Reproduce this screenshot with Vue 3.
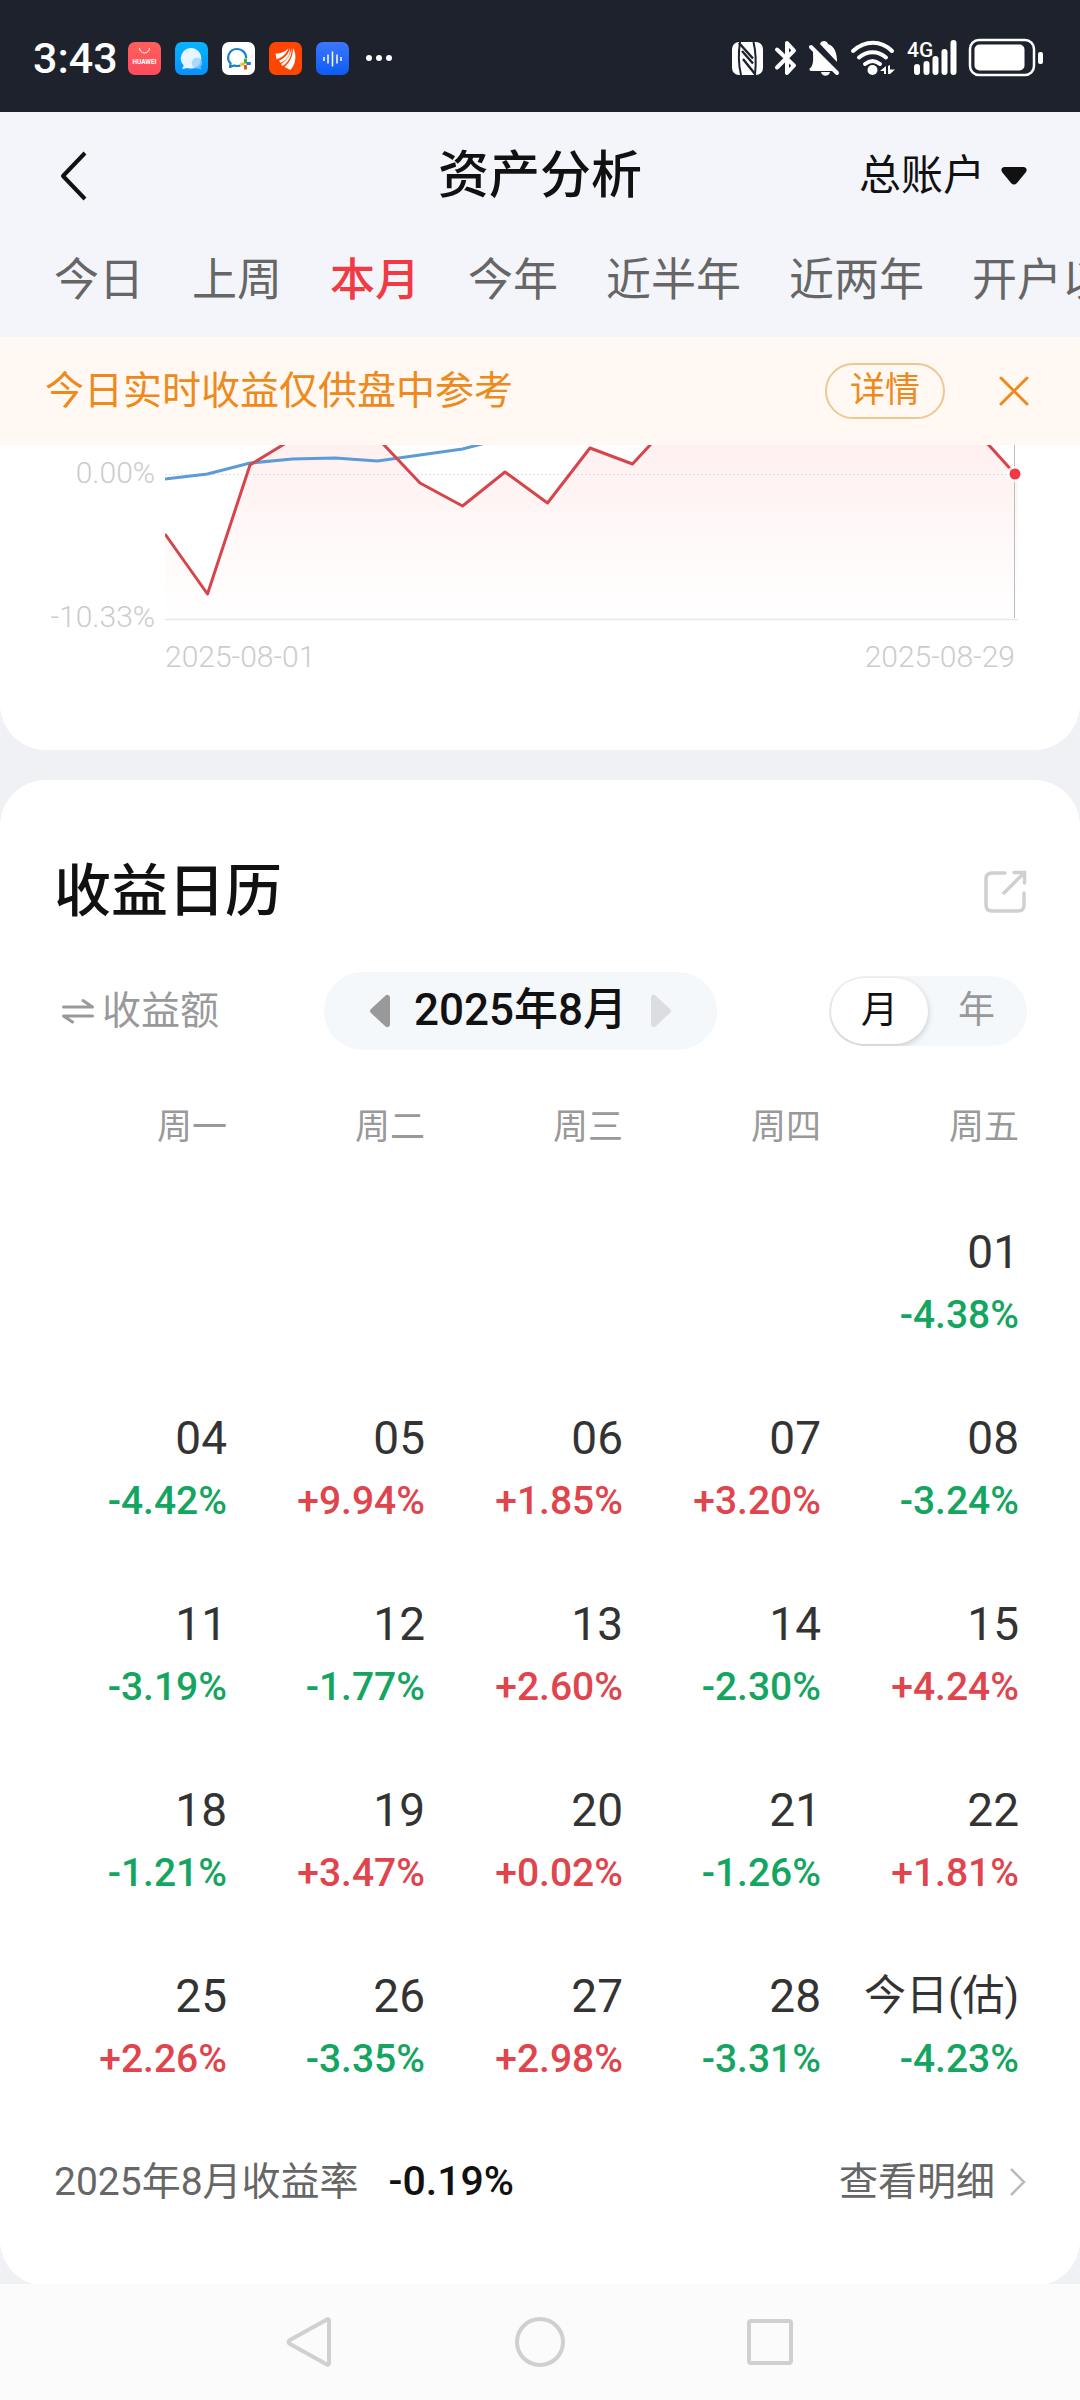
<script setup>
import { ref, computed } from 'vue'

const tabs = ['今日', '上周', '本月', '今年', '近半年', '近两年', '开户以来']
const activeTab = ref('本月')
const account = ref('总账户')
const showNotice = ref(true)
const mode = ref('month')

const weekdays = ['周一', '周二', '周三', '周四', '周五']
const weeks = [
  [null, null, null, null, { day: '01', rate: -4.38 }],
  [
    { day: '04', rate: -4.42 },
    { day: '05', rate: 9.94 },
    { day: '06', rate: 1.85 },
    { day: '07', rate: 3.2 },
    { day: '08', rate: -3.24 }
  ],
  [
    { day: '11', rate: -3.19 },
    { day: '12', rate: -1.77 },
    { day: '13', rate: 2.6 },
    { day: '14', rate: -2.3 },
    { day: '15', rate: 4.24 }
  ],
  [
    { day: '18', rate: -1.21 },
    { day: '19', rate: 3.47 },
    { day: '20', rate: 0.02 },
    { day: '21', rate: -1.26 },
    { day: '22', rate: 1.81 }
  ],
  [
    { day: '25', rate: 2.26 },
    { day: '26', rate: -3.35 },
    { day: '27', rate: 2.98 },
    { day: '28', rate: -3.31 },
    { day: '今日(估)', rate: -4.23 }
  ]
]

const formatRate = (rate) => (rate > 0 ? '+' : '') + rate.toFixed(2) + '%'

// 折线坐标，横向步长 42.5
const step = 42.5
const mine = [89, 149, 20, -6, -50, -7, 38, 61, 27, 58, 3, 19, -27, -60, -70, -80, -70, -60, -50, -18, 29]
const market = [34, 29, 18, 14, 13, 16, 10, 4, -7]

const toPoints = (list) => list.map((y, i) => `${i * step},${y}`).join(' ')
const minePoints = computed(() => toPoints(mine))
const marketPoints = computed(() => toPoints(market))
const areaPoints = computed(() => `0,174 ${minePoints.value} 853,29 853,174`)
</script>

<template>
  <div class="page">
    <div class="status-bar">
      <span class="time">3:43</span>
      <div class="apps">
        <svg viewBox="0 0 33 33">
          <defs>
            <linearGradient id="g-red" x1="0" y1="0" x2="0" y2="1">
              <stop offset="0" stop-color="#ff605c" />
              <stop offset="1" stop-color="#ff4a5c" />
            </linearGradient>
          </defs>
          <rect width="33" height="33" rx="7" fill="url(#g-red)" />
          <path d="M11.5 6a5 5 0 0 0 10 0" fill="none" stroke="#fff" stroke-width="1" />
          <text x="16.5" y="21.5" text-anchor="middle" font-size="6.4" font-weight="700" fill="#fff">HUAWEI</text>
        </svg>
        <svg viewBox="0 0 33 33">
          <defs>
            <linearGradient id="g-sky" x1="0" y1="0" x2="0" y2="1">
              <stop offset="0" stop-color="#08b5ff" />
              <stop offset="1" stop-color="#0791ff" />
            </linearGradient>
          </defs>
          <rect width="33" height="33" rx="7" fill="url(#g-sky)" />
          <path d="M16 6a10.3 10.3 0 1 1-3.500 20l-5.500 1 1.800-3.500A10.300 10.300 0 0 1 16 6z" fill="#e6f5ff" />
          <path d="M21.500 15.500a5.500 5.500 0 0 1 4 9.300l1 2.700-3.500-1a5.500 5.500 0 1 1-1.500-11z" fill="#8ed2ff" opacity=".75" />
        </svg>
        <svg viewBox="0 0 33 33">
          <rect width="33" height="33" rx="7" fill="#fff" />
          <path d="M18.500 23.500c-2 .6-4.500.6-6.500 0l-4 1.500.6-3.600C3.500 16.500 7 7 14.700 7c5.800 0 9.500 4 9.500 9" fill="none" stroke="#1b7fd0" stroke-width="2.200" stroke-linejoin="round" />
          <path d="M23.500 16.500v5" stroke="#3fae49" stroke-width="3" />
          <path d="M24.500 21.500l4.300 0" stroke="#1b7fd0" stroke-width="3" />
          <path d="M23.500 23v4.500" stroke="#e8532b" stroke-width="3" />
          <path d="M18.500 22.200h4" stroke="#f6b900" stroke-width="3" />
        </svg>
        <svg viewBox="0 0 33 33">
          <rect width="33" height="33" rx="7" fill="#ff4500" />
          <path d="M6.500 11.500C12 11.500 17 9.500 19.500 6 18 11 14 15.500 7.500 17.300z" fill="#fff" />
          <path d="M21 6c.5 7-3.500 12.500-9.500 14.800l-1.500-2C16 16 19.500 12 21 6z" fill="#fff" />
          <path d="M22.500 6c.5 8-3 14-9 18l-1.500-2C18 18.500 21.500 13 22.500 6z" fill="#fff" />
          <path d="M24 6c4 6 3 16-2.500 22l-6-3C21 20 24 14 24 6z" fill="#fff" />
        </svg>
        <svg viewBox="0 0 33 33">
          <defs>
            <linearGradient id="g-blue" x1="0" y1="0" x2="0" y2="1">
              <stop offset="0" stop-color="#3d76ff" />
              <stop offset="1" stop-color="#0c5cf5" />
            </linearGradient>
          </defs>
          <rect width="33" height="33" rx="7" fill="url(#g-blue)" />
          <path d="M8 15v4M12 12.500v9M16.500 9.500v15M21 12.500v9M25 15v4" stroke="#fff" stroke-width="1.500" />
        </svg>
      </div>
      <svg class="more-dots" viewBox="0 0 28 8">
        <circle cx="4" cy="4" r="3" />
        <circle cx="14" cy="4" r="3" />
        <circle cx="24" cy="4" r="3" />
      </svg>
      <!-- 系统图标：NFC、蓝牙、静音、Wi-Fi、信号、电池 -->
      <svg class="system" viewBox="0 0 312 40">
        <rect x="1" y="4" width="31" height="33" rx="7" fill="#fff" />
        <path d="M10 37C7.500 27 7.500 14 9 4M22.500 4c2.500 10 2.500 23 1.500 33" fill="none" stroke="#1e222d" stroke-width="2" />
        <path d="M8 5l14 15.500M12 21l12 15M11 13l11 12.500" fill="none" stroke="#1e222d" stroke-width="2.400" />
        <path d="M46 11.500L63 27.500 56 35V5l7 7.500L46 29.500" fill="none" stroke="#fff" stroke-width="4" stroke-linecap="round" stroke-linejoin="round" />
        <path d="M89 6c1-4 7-4 8 0 6 2 9 8 9 18z" fill="#fff" />
        <path d="M82 12l22 21H80c-2 0-2-3 0-3.500 3-4 2-11 2-17.500zM90 34h9c-1 5-8 5-9 0z" fill="#fff" />
        <path d="M80 9l26 26" stroke="#fff" stroke-width="4" stroke-linecap="round" />
        <g fill="none" stroke="#fff" stroke-width="4" stroke-linecap="round">
          <path d="M122 13c12-11 28-11 39 0M128 19.500c8-7 19-7 27 0M134 26c5-4 10-4 15 0" />
        </g>
        <circle cx="141.500" cy="32" r="5" fill="#fff" />
        <path d="M149 33l6-5v8h-2v-3zM164 31.500l-5 4.500h-2v-8l2-1v4.500z" fill="#fff" />
        <text x="176" y="19" font-size="21" font-weight="500" fill="#fff">4G</text>
        <path d="M186 29v5M195.500 26v8M204.500 21v13M213.500 14v20M222.500 5v29" stroke="#fff" stroke-width="6" stroke-linecap="round" />
        <rect x="239" y="2" width="64" height="35" rx="9" fill="none" stroke="#fff" stroke-width="2.500" />
        <rect x="243.500" y="6.500" width="50" height="26" rx="5" fill="#fff" />
        <rect x="307" y="14" width="5" height="12" rx="2" fill="#fff" />
      </svg>
    </div>

    <header class="nav-bar">
      <button class="back" aria-label="返回">
        <svg viewBox="0 0 32 52">
          <path d="M28 3L6 26l22 23" fill="none" stroke="#111" stroke-width="4" stroke-linejoin="round" />
        </svg>
      </button>
      <h1>资产分析</h1>
      <label class="account">
        <select v-model="account" aria-label="账户">
          <option>总账户</option>
        </select>
        <svg viewBox="0 0 28 20">
          <path d="M4 1h20q4 1 2 5L17 17q-3 3-6 0L2 6q-2-4 2-5z" fill="#111" />
        </svg>
      </label>
    </header>

    <nav class="tabs">
      <button v-for="tab in tabs"
              :key="tab"
              :class="{ active: tab === activeTab }"
              @click="activeTab = tab">{{ tab }}</button>
    </nav>

    <div v-if="showNotice" class="notice">
      <span>今日实时收益仅供盘中参考</span>
      <button class="detail">详情</button>
      <button class="close" aria-label="关闭" @click="showNotice = false">
        <svg viewBox="0 0 30 30">
          <path d="M2 2l26 26M28 2L2 28" stroke="#ee8a1c" stroke-width="3" stroke-linecap="round" />
        </svg>
      </button>
    </div>

    <main>
      <section class="card chart-card">
        <div class="y-axis">
          <span>0.00%</span>
          <span>-10.33%</span>
        </div>
        <div class="plot">
          <svg viewBox="0 0 860 176">
            <defs>
              <linearGradient id="g-area" x1="0" y1="0" x2="0" y2="174" gradientUnits="userSpaceOnUse">
                <stop offset="0" stop-color="#fff0f0" />
                <stop offset="1" stop-color="#ffffff" />
              </linearGradient>
            </defs>
            <polygon :points="areaPoints" fill="url(#g-area)" />
            <path d="M0 29.500h846" stroke="#e6dede" stroke-width="1" stroke-dasharray="2 2" />
            <path d="M0 174.500h853" stroke="#e8e8e8" stroke-width="1.500" />
            <path d="M849.500 0v173" stroke="#bdbdbd" stroke-width="1" />
            <polyline :points="marketPoints" fill="none" stroke="#5a9bd8" stroke-width="3" />
            <polyline :points="minePoints" fill="none" stroke="#d6454b" stroke-width="3" stroke-linejoin="round" />
            <circle cx="850" cy="29" r="8" fill="#fff" opacity=".8" />
            <circle cx="850" cy="29" r="5.500" fill="#f03a44" />
          </svg>
          <div class="x-axis">
            <span>2025-08-01</span>
            <span>2025-08-29</span>
          </div>
        </div>
      </section>

      <section class="card calendar-card">
        <div class="card-head">
          <h2>收益日历</h2>
          <button aria-label="分享">
            <svg viewBox="0 0 44 44">
              <path d="M22 3H9Q3 3 3 9v26q0 6 6 6h26q6 0 6-6V23M21 23L40 4M31 2.500h10.500V13" fill="none" stroke="#d0d0d0" stroke-width="3.500" stroke-linecap="round" />
            </svg>
          </button>
        </div>

        <div class="toolbar">
          <button class="switch">
            <svg viewBox="0 0 32 26">
              <path d="M1.500 9h29L21 2.500M30.500 18h-29l9 6" fill="none" stroke="#999" stroke-width="3" stroke-linecap="round" stroke-linejoin="round" />
            </svg>
            收益额
          </button>
          <div class="month-picker">
            <button aria-label="上个月">
              <svg viewBox="0 0 20 34">
                <path d="M20 3v28q-2 4-5 1L1 19q-2-2 0-4L15 2q3-3 5 1z" fill="#999" />
              </svg>
            </button>
            <span>2025年8月</span>
            <button aria-label="下个月">
              <svg viewBox="0 0 20 34">
                <path d="M0 3v28q2 4 5 1l14-13q2-2 0-4L5 2Q2-1 0 3z" fill="#dcdde1" />
              </svg>
            </button>
          </div>
          <div class="segmented">
            <label :class="{ on: mode === 'month' }">
              <input v-model="mode" type="radio" name="mode" value="month">月
            </label>
            <label :class="{ on: mode === 'year' }">
              <input v-model="mode" type="radio" name="mode" value="year">年
            </label>
          </div>
        </div>

        <table class="calendar">
          <thead>
            <tr>
              <th v-for="name in weekdays" :key="name">{{ name }}</th>
            </tr>
          </thead>
          <tbody>
            <tr v-for="(week, i) in weeks" :key="i">
              <td v-for="(cell, j) in week" :key="j">
                <template v-if="cell">
                  <div :class="['day', { today: cell.day.length > 2 }]">{{ cell.day }}</div>
                  <div :class="['rate', cell.rate > 0 ? 'up' : 'down']">{{ formatRate(cell.rate) }}</div>
                </template>
              </td>
            </tr>
          </tbody>
        </table>

        <div class="summary">
          <span class="label">2025年8月收益率</span>
          <span class="value">-0.19%</span>
          <a href="#">
            查看明细
            <svg viewBox="0 0 18 30">
              <path d="M2 2l13 13L2 28" fill="none" stroke="#bbb" stroke-width="2.500" />
            </svg>
          </a>
        </div>
      </section>
    </main>

    <footer class="system-nav">
      <button aria-label="返回">
        <svg viewBox="0 0 52 52">
          <path d="M45 5v42q0 3-3 1L6 28q-3-2 0-4L42 4q3-2 3 1z" fill="none" stroke="#d0d0d0" stroke-width="4" />
        </svg>
      </button>
      <button aria-label="主页">
        <svg viewBox="0 0 52 52">
          <circle cx="26" cy="26" r="23" fill="none" stroke="#d0d0d0" stroke-width="4" />
        </svg>
      </button>
      <button aria-label="最近任务">
        <svg viewBox="0 0 52 52">
          <rect x="5" y="5" width="42" height="42" rx="2" fill="none" stroke="#d0d0d0" stroke-width="4" />
        </svg>
      </button>
    </footer>
  </div>
</template>

<style>
body {
  background: #f0f1f5;
}
</style>

<style scoped>
.page {
  font-family: Roboto, "Noto Sans CJK SC", sans-serif;
  line-height: 1.4;
  color: #111;
  overflow: hidden;
}

.page svg {
  display: block;
  flex-shrink: 0;
}

button,
select {
  padding: 0;
  border: 0;
  background: none;
  color: inherit;
  font: inherit;
  cursor: pointer;
}

.status-bar {
  display: flex;
  align-items: center;
  height: 112px;
  padding: 4px 37px 0 33px;
  box-sizing: border-box;
  background: #1e222d;
  color: #fff;
}

.time {
  font-size: 43px;
  font-weight: 500;
}

.apps {
  display: flex;
  gap: 14px;
  margin-left: 10px;
}

.apps svg {
  width: 33px;
  height: 33px;
}

.more-dots {
  width: 28px;
  margin-left: 16px;
  fill: #fff;
}

.system {
  width: 312px;
  margin-left: auto;
}

.nav-bar {
  display: grid;
  grid-template-columns: 1fr auto 1fr;
  align-items: center;
  height: 128px;
  padding: 0 52px;
  background: #f4f5fa;
}

.back {
  justify-self: start;
  padding-left: 5px;
}

.back svg {
  width: 32px;
}

h1 {
  margin: 0;
  font-size: 51px;
  font-weight: 500;
}

.account {
  display: flex;
  align-items: center;
  justify-self: end;
  gap: 14px;
}

.account select {
  appearance: none;
  font-size: 42px;
}

.account svg {
  width: 28px;
}

.tabs {
  display: flex;
  gap: 48px;
  height: 97px;
  padding: 0 0 16px 54px;
  box-sizing: border-box;
  overflow: hidden;
  background: #f4f5fa;
}

.tabs button {
  flex-shrink: 0;
  color: #666;
  font-size: 45px;
  white-space: nowrap;
}

.tabs .active {
  color: #f03a44;
  font-weight: 500;
}

.notice {
  display: flex;
  align-items: center;
  height: 108px;
  padding: 0 51px 0 45px;
  box-sizing: border-box;
  background: #fff8f3;
  color: #ee8a1c;
  font-size: 39px;
}

.detail {
  width: 120px;
  height: 56px;
  margin-left: auto;
  border: 2px solid #efc795;
  border-radius: 28px;
  font-size: 35px;
  line-height: 48px;
}

.close {
  margin-left: 54px;
}

.close svg {
  width: 30px;
}

.card {
  background: #fff;
  border-radius: 46px;
}

.chart-card {
  display: flex;
  height: 305px;
  padding-right: 55px;
  box-sizing: border-box;
  border-top-left-radius: 0;
  border-top-right-radius: 0;
  color: #ccc;
  font-weight: 300;
}

.y-axis {
  display: flex;
  flex-direction: column;
  flex-shrink: 0;
  gap: 112px;
  width: 165px;
  padding: 12px 10px 0 0;
  box-sizing: border-box;
  font-size: 30px;
  line-height: 32px;
  text-align: right;
}

.plot {
  flex: 1;
}

.plot svg {
  width: 100%;
}

.x-axis {
  display: flex;
  justify-content: space-between;
  padding: 20px 10px 0 0;
  font-size: 30px;
  line-height: 32px;
}

.calendar-card {
  margin: 30px 0 -2px;
  padding: 76px 53px 72px 54px;
}

.card-head {
  display: flex;
  align-items: center;
  justify-content: space-between;
  height: 72px;
}

h2 {
  margin: 0;
  font-size: 57px;
  font-weight: 500;
}

.card-head svg {
  width: 44px;
}

.toolbar {
  display: flex;
  align-items: center;
  height: 78px;
  margin-top: 44px;
}

.switch {
  display: flex;
  align-items: center;
  gap: 8px;
  width: 270px;
  padding-left: 8px;
  color: #999;
  font-size: 39px;
}

.switch svg {
  width: 32px;
}

.month-picker {
  display: flex;
  align-items: center;
  justify-content: space-between;
  width: 393px;
  height: 78px;
  padding: 0 46px;
  box-sizing: border-box;
  border-radius: 39px;
  background: #f4f8fb;
  font-size: 44px;
  font-weight: 500;
}

.month-picker svg {
  width: 20px;
}

.segmented {
  display: flex;
  width: 198px;
  height: 70px;
  margin-left: auto;
  padding: 2px;
  box-sizing: border-box;
  overflow: hidden;
  border-radius: 35px;
  background: #f4f8fb;
  color: #999;
  font-size: 37px;
}

.segmented label {
  flex: 1;
  line-height: 66px;
  border-radius: 33px;
  text-align: center;
  cursor: pointer;
}

.segmented .on {
  background: #fff;
  box-shadow: 0 2px 6px rgba(0, 0, 0, 0.2);
  color: #111;
}

.segmented input {
  position: absolute;
  opacity: 0;
}

.calendar {
  width: calc(100% + 17px);
  margin: 44px 0 0 -25px;
  border-collapse: collapse;
  table-layout: fixed;
}

.calendar th,
.calendar td {
  padding: 0;
  text-align: right;
  vertical-align: top;
}

.calendar th {
  height: 126px;
  color: #999;
  font-size: 35px;
  font-weight: 400;
  line-height: 68px;
}

.calendar td {
  height: 186px;
}

.day {
  color: #333;
  font-size: 46px;
  line-height: 64px;
}

.today {
  font-size: 42px;
  white-space: nowrap;
}

.rate {
  font-size: 39px;
  font-weight: 500;
  line-height: 62px;
}

.up {
  color: #e0444c;
}

.down {
  color: #14a560;
}

.summary {
  display: flex;
  align-items: center;
  height: 64px;
  font-size: 39px;
}

.label {
  color: #666;
}

.value {
  margin-left: 30px;
  font-size: 41px;
  font-weight: 500;
}

.summary a {
  display: flex;
  align-items: center;
  gap: 14px;
  margin-left: auto;
  color: #666;
  text-decoration: none;
}

.summary svg {
  width: 18px;
}

.system-nav {
  position: relative;
  display: flex;
  align-items: center;
  justify-content: center;
  gap: 178px;
  height: 116px;
  background: #fbfbfb;
}

.system-nav svg {
  width: 52px;
}
</style>
